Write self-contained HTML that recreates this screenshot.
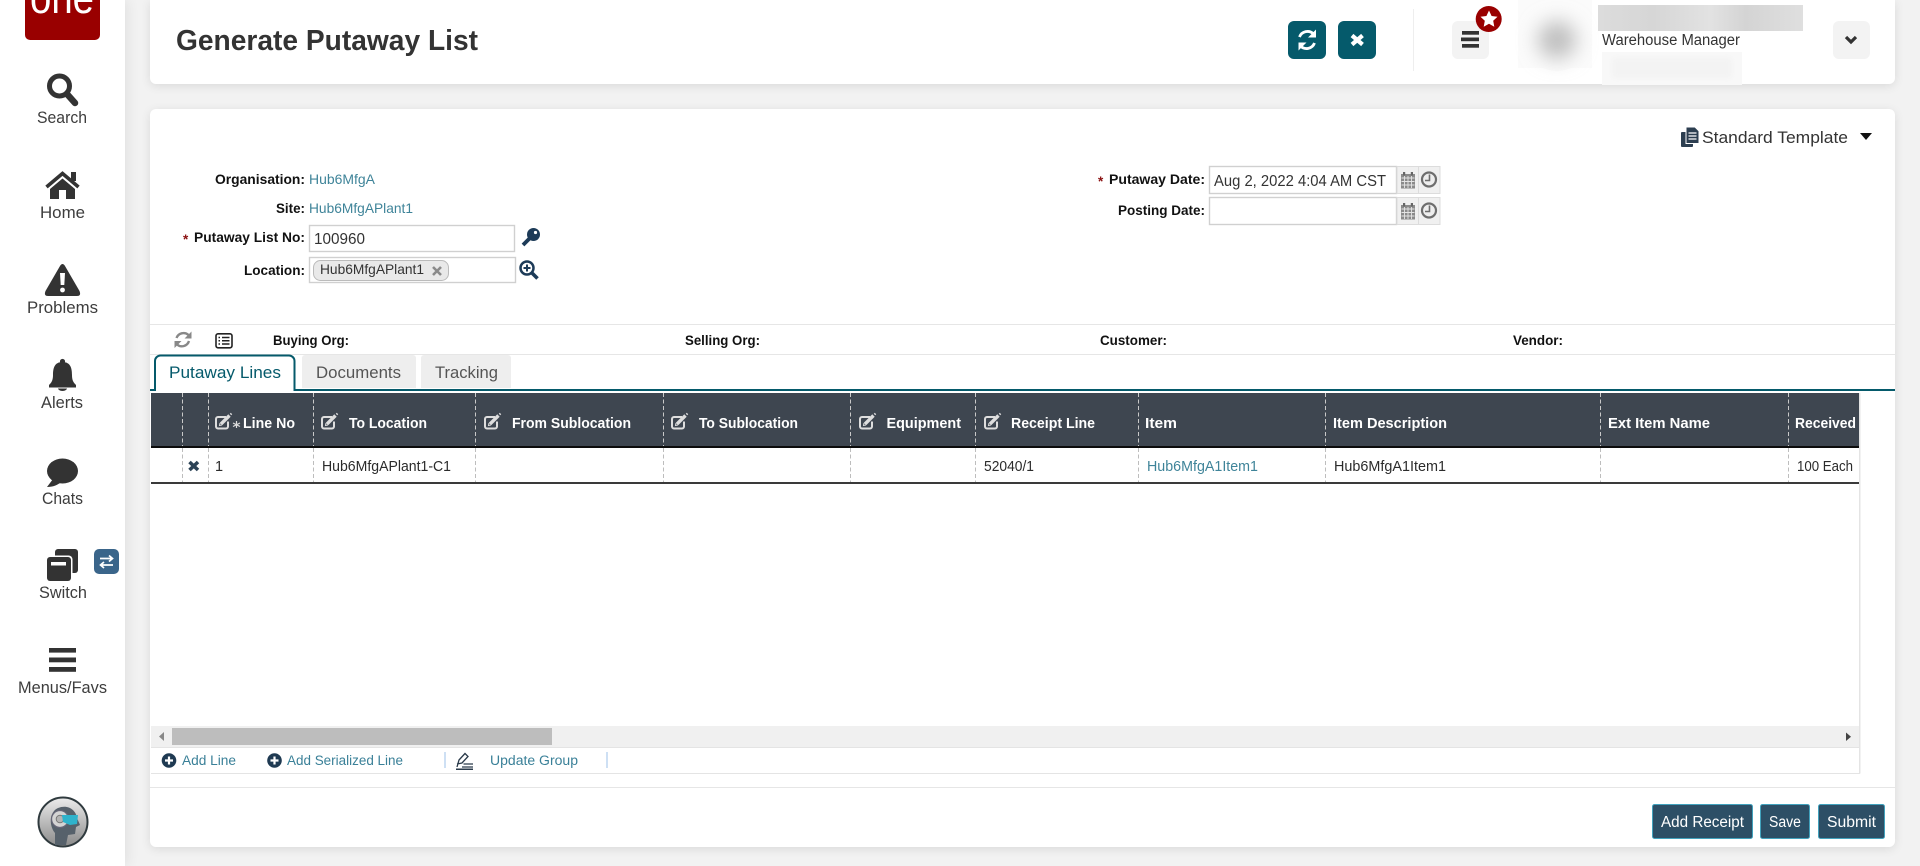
<!DOCTYPE html>
<html><head><meta charset="utf-8"><title>Generate Putaway List</title>
<style>
html,body{margin:0;padding:0;width:1920px;height:866px;overflow:hidden;background:#f2f2f2}
.c{position:absolute;background:#fff;box-shadow:0 2px 10px rgba(0,0,0,.10)}
svg{position:absolute;left:0;top:0}
text{font-family:"Liberation Sans",Arial,sans-serif;font-size:14px;fill:#333}
.b{font-weight:bold;font-size:13.5px;fill:#111}
.l{font-size:14px;fill:#3f8499}
.r{font-size:14.5px;fill:#2b2b2b}
.h{font-weight:bold;font-size:14.5px;fill:#fff}
.s{font-size:16.5px;fill:#3d3d3d}
.w{font-size:15.5px;fill:#fff}
.t{font-size:13.5px;fill:#3a8098}
</style></head><body>
<div class="c" style="left:0;top:0;width:125px;height:866px;box-shadow:3px 0 12px rgba(0,0,0,.07)"></div>
<div class="c" style="left:150px;top:0;width:1745px;height:84px;border-radius:0 0 6px 6px"></div>
<div class="c" style="left:150px;top:109px;width:1745px;height:738px;border-radius:6px"></div>
<svg width="1920" height="866" viewBox="0 0 1920 866">
<defs>
<filter id="bl" x="-80%" y="-80%" width="260%" height="260%"><feGaussianBlur stdDeviation="10"/></filter>
<filter id="bl2" x="-10%" y="-30%" width="120%" height="160%"><feGaussianBlur stdDeviation="3"/></filter>
<linearGradient id="ng"><stop offset="0" stop-color="#dcdcdc"/><stop offset=".27" stop-color="#d6d6d6"/><stop offset=".55" stop-color="#e2e2e2"/><stop offset=".72" stop-color="#d4d4d4"/><stop offset="1" stop-color="#dfdfdf"/></linearGradient>
<linearGradient id="ag" x1="0" y1="0" x2="0" y2="1"><stop offset="0" stop-color="#ececec"/><stop offset="1" stop-color="#8a8a8a"/></linearGradient>
<g id="ed" fill="none" stroke="#dedede">
<path d="M11 4.500H3a2 2 0 0 0-2 2V14a2 2 0 0 0 2 2h8a2 2 0 0 0 2-2V9" stroke-width="2"/>
<path d="M6 11.500L14.500 3" stroke-width="3.400"/><path d="M5 10.500L4.500 13l2.500-.5" stroke-width="1"/>
<path d="M15.500 2l1-1" stroke-width="2"/>
</g>
<g id="pl"><circle r="7.300" fill="#1f3a52"/><path d="M-4-0H4M0-4V4" stroke="#fff" stroke-width="2.200"/></g>
</defs>

<!-- logo -->
<path d="M25 0H100V35a5 5 0 0 1-5 5H30a5 5 0 0 1-5-5Z" fill="#990000"/>
<text x="30" y="13" textLength="64" lengthAdjust="spacingAndGlyphs" style="font-size:45px;fill:#fff">one</text>

<!-- sidebar icons -->
<circle cx="59.500" cy="86" r="10" fill="none" stroke="#333" stroke-width="5"/>
<path d="M67 94L75 103" stroke="#333" stroke-width="6.500" stroke-linecap="round"/>
<text class="s" x="37" y="123" textLength="50" lengthAdjust="spacingAndGlyphs">Search</text>

<path d="M46.500 187L62.500 173.500L78.500 187" fill="none" stroke="#333" stroke-width="3.600"/>
<rect x="71" y="172" width="5" height="9" fill="#333"/>
<path d="M50 189L62.500 178.500L75 189V199H66V190H59V199H50Z" fill="#333"/>
<text class="s" x="40" y="218" textLength="45" lengthAdjust="spacingAndGlyphs">Home</text>

<path d="M60 266Q62.500 262 65 266L79.500 291Q81.500 296 77 296H48Q43.500 296 45.500 291Z" fill="#333"/>
<path d="M60 273H65L64.300 285H60.700Z" fill="#fff"/><circle cx="62.500" cy="290" r="2.400" fill="#fff"/>
<text class="s" x="27" y="313" textLength="71" lengthAdjust="spacingAndGlyphs">Problems</text>

<circle cx="62.500" cy="361.500" r="2.600" fill="#333"/>
<path d="M62.500 362C71 362 72 369 72 375C72 381 74 383 76 385V387.500H49V385C51 383 53 381 53 375C53 369 54 362 62.500 362Z" fill="#333"/>
<path d="M58 388.500H67C66 391.800 59 391.800 58 388.500Z" fill="#333"/>
<text class="s" x="41" y="408" textLength="42" lengthAdjust="spacingAndGlyphs">Alerts</text>

<ellipse cx="62.500" cy="471" rx="15.500" ry="12.500" fill="#333"/>
<path d="M53 479L47 487C53 487 58 485 61 482Z" fill="#333"/>
<text class="s" x="42" y="504" textLength="41" lengthAdjust="spacingAndGlyphs">Chats</text>

<rect x="55" y="549" width="23" height="24" rx="3" fill="#333"/>
<rect x="45.500" y="555.500" width="27" height="27" rx="4" fill="#fff"/>
<rect x="47" y="557" width="24" height="24" rx="3" fill="#333"/>
<rect x="51" y="562" width="15" height="3.500" fill="#fff"/>
<rect x="94" y="549" width="25" height="25" rx="5" fill="#3a658a"/>
<path d="M100 558.500H112M109 555.500L112.500 558.500L109 561.500M113 565H101M104 562L100.500 565L104 568" fill="none" stroke="#fff" stroke-width="1.700"/>
<text class="s" x="39" y="598" textLength="48" lengthAdjust="spacingAndGlyphs">Switch</text>

<rect x="49" y="648" width="27" height="4.600" fill="#333"/><rect x="49" y="657.500" width="27" height="4.800" fill="#333"/><rect x="49" y="667" width="27" height="4.800" fill="#333"/>
<text class="s" x="18" y="693" textLength="89" lengthAdjust="spacingAndGlyphs">Menus/Favs</text>

<!-- robot avatar -->
<circle cx="63" cy="822" r="24.500" fill="url(#ag)" stroke="#2f3a3e" stroke-width="2"/>
<path d="M55 845V833C49 826 49 812 58 808C68 804 76 810 77 818L80 825L76 827L75 834L68 835L66 845Z" fill="#56616b"/>
<circle cx="60" cy="819" r="8.500" fill="#d4d4d4" stroke="#667" stroke-width="1.300"/>
<circle cx="60" cy="819" r="3.800" fill="#b4b4b4" stroke="#777"/>
<path d="M62 815H78L77 824L70 825L63 822Z" fill="#2fb3cc"/>

<!-- header -->
<text x="176" y="50" textLength="302" lengthAdjust="spacingAndGlyphs" style="font-size:29px;font-weight:bold;fill:#333">Generate Putaway List</text>
<rect x="1288" y="21" width="38" height="38" rx="6" fill="#055a6b"/>
<path d="M1299.500 37A8.500 8.500 0 0 1 1313.500 34M1314.500 43A8.500 8.500 0 0 1 1300.500 46" fill="none" stroke="#fff" stroke-width="2.800"/>
<path d="M1316 29.500V37.500H1308ZM1298.500 50.500V42.500H1306.500Z" fill="#fff"/>
<rect x="1338" y="21" width="38" height="38" rx="6" fill="#055a6b"/>
<path d="M1352 35.500L1362.500 44.500M1362.500 35.500L1352 44.500" stroke="#fff" stroke-width="4.200"/>
<rect x="1413" y="9" width="1" height="62" fill="#eee"/>
<rect x="1452" y="21" width="37" height="38" rx="6" fill="#f3f3f3"/>
<rect x="1462" y="31" width="17" height="3.700" fill="#333"/><rect x="1461" y="37.500" width="18" height="3.700" fill="#333"/><rect x="1462" y="44" width="17" height="3.700" fill="#333"/>
<circle cx="1488.700" cy="19" r="13" fill="#990000"/>
<path d="M1489 10.500L1491.600 16L1497.500 16.700L1493.200 20.800L1494.300 26.800L1489 23.800L1483.700 26.800L1484.800 20.800L1480.500 16.700L1486.400 16Z" fill="#fff"/>
<rect x="1518" y="0" width="74" height="68" fill="#fbfbfb"/>
<circle cx="1557" cy="40" r="31" fill="#fbfbfb"/>
<circle cx="1557" cy="40" r="19" fill="#bdbdbd" filter="url(#bl)"/>
<rect x="1598" y="5" width="205" height="26" fill="url(#ng)"/>
<text x="1602" y="45" textLength="138" lengthAdjust="spacingAndGlyphs" style="font-size:15.500px;fill:#333">Warehouse Manager</text>
<rect x="1602" y="52" width="140" height="33" fill="#f8f8f8"/>
<rect x="1612" y="58" width="120" height="20" fill="#f3f3f3" filter="url(#bl2)"/>
<rect x="1833" y="21" width="37" height="38" rx="6" fill="#f3f3f3"/>
<path d="M1846 37L1851 42L1856 37" fill="none" stroke="#333" stroke-width="3.200"/>

<!-- template -->
<rect x="1681" y="132" width="12" height="15" rx="1" fill="#2c3e50"/>
<path d="M1689 127H1695L1699 131V143.500H1686V127Z" fill="#2c3e50" stroke="#fff" stroke-width="1"/>
<path d="M1688.500 133H1696.500M1688.500 136H1696.500M1688.500 139H1696.500" stroke="#fff" stroke-width="1.200"/>
<text x="1702" y="143" textLength="146" lengthAdjust="spacingAndGlyphs" style="font-size:17px;fill:#333">Standard Template</text>
<path d="M1860 133H1872L1866 140Z" fill="#111"/>

<!-- form left -->
<text class="b" x="215" y="184" textLength="90" lengthAdjust="spacingAndGlyphs">Organisation:</text>
<text class="l" x="309" y="184" textLength="66" lengthAdjust="spacingAndGlyphs">Hub6MfgA</text>
<text class="b" x="276" y="213" textLength="29" lengthAdjust="spacingAndGlyphs">Site:</text>
<text class="l" x="309" y="213" textLength="104" lengthAdjust="spacingAndGlyphs">Hub6MfgAPlant1</text>
<text class="b" x="183" y="244" style="fill:#8a1010">*</text>
<text class="b" x="194" y="242" textLength="111" lengthAdjust="spacingAndGlyphs">Putaway List No:</text>
<rect x="309.500" y="225.500" width="205" height="26" fill="#fff" stroke="#d0d0d0" stroke-width="1.400"/>
<text x="314" y="244" textLength="51" lengthAdjust="spacingAndGlyphs" style="font-size:15.500px;fill:#333">100960</text>
<circle cx="533.500" cy="234.500" r="6.500" fill="#1d3b58"/><circle cx="535.500" cy="232.500" r="1.600" fill="#fff"/>
<path d="M530 238L523 245" stroke="#1d3b58" stroke-width="3.800"/>
<text class="b" x="244" y="275" textLength="61" lengthAdjust="spacingAndGlyphs">Location:</text>
<rect x="309.500" y="257.500" width="206" height="25" fill="#fff" stroke="#d0d0d0" stroke-width="1.400"/>
<rect x="313.500" y="260.500" width="135" height="20" rx="7" fill="#e9e9e9" stroke="#bbb"/>
<text x="320" y="274" textLength="104" lengthAdjust="spacingAndGlyphs" style="font-size:14px;fill:#333">Hub6MfgAPlant1</text>
<path d="M433 267L441 275M441 267L433 275" stroke="#8a8a8a" stroke-width="2.600"/>
<circle cx="527" cy="268" r="6.500" fill="none" stroke="#1d3b58" stroke-width="2.500"/>
<path d="M523.500 268H530.500M527 264.500V271.500" stroke="#1d3b58" stroke-width="2"/>
<path d="M532 273L537.500 278.500" stroke="#1d3b58" stroke-width="3.600"/>

<!-- form right -->
<text class="b" x="1098" y="186" style="fill:#8a1010">*</text>
<text class="b" x="1109" y="184" textLength="96" lengthAdjust="spacingAndGlyphs">Putaway Date:</text>
<rect x="1209.500" y="166.500" width="187" height="27" fill="#fff" stroke="#d0d0d0" stroke-width="1.400"/>
<text x="1214" y="186" textLength="172" lengthAdjust="spacingAndGlyphs" style="font-size:15.500px;fill:#333">Aug 2, 2022 4:04 AM CST</text>
<text class="b" x="1118" y="215" textLength="87" lengthAdjust="spacingAndGlyphs">Posting Date:</text>
<rect x="1209.500" y="197.500" width="187" height="27" fill="#fff" stroke="#d0d0d0" stroke-width="1.400"/>
<g id="ad">
<rect x="1397" y="166.500" width="21.500" height="27" fill="#f0f0f0" stroke="#dcdcdc"/>
<rect x="1418.500" y="166.500" width="21.500" height="27" fill="#f0f0f0" stroke="#dcdcdc"/>
<rect x="1401" y="174" width="14" height="14.500" fill="#8a8a8a"/>
<path d="M1401.500 178H1414.500M1401.500 181.500H1414.500M1401.500 185H1414.500M1404.500 176V188M1408 176V188M1411.500 176V188" stroke="#e4e4e4" stroke-width=".9"/>
<rect x="1403" y="172" width="2.200" height="3.500" fill="#666"/><rect x="1410.800" y="172" width="2.200" height="3.500" fill="#666"/>
<circle cx="1429" cy="179.500" r="7" fill="#eee" stroke="#6e6e6e" stroke-width="2.200"/>
<path d="M1429.500 174.500V180.500H1425" fill="none" stroke="#6e6e6e" stroke-width="1.600"/>
</g>
<use href="#ad" y="31"/>

<!-- sub bar -->
<rect x="150" y="324" width="1745" height="1" fill="#e6e6e6"/>
<rect x="150" y="354" width="1745" height="1" fill="#e6e6e6"/>
<path d="M176.500 338A7.500 7.500 0 0 1 188.500 335M189 341A7.500 7.500 0 0 1 177 344.500" fill="none" stroke="#888" stroke-width="2.400"/>
<path d="M191.500 331.500V338.500H184.500ZM174.500 348V341H181.500Z" fill="#888"/>
<rect x="216" y="333.800" width="16" height="14" rx="2" fill="#fff" stroke="#222" stroke-width="1.600"/>
<path d="M218.500 337.500H220M218.500 340.800H220M218.500 344H220M222 337.500H229.500M222 340.800H229.500M222 344H229.500" stroke="#222" stroke-width="1.500"/>
<text class="b" x="273" y="345" textLength="76" lengthAdjust="spacingAndGlyphs">Buying Org:</text>
<text class="b" x="685" y="345" textLength="75" lengthAdjust="spacingAndGlyphs">Selling Org:</text>
<text class="b" x="1100" y="345" textLength="67" lengthAdjust="spacingAndGlyphs">Customer:</text>
<text class="b" x="1513" y="345" textLength="50" lengthAdjust="spacingAndGlyphs">Vendor:</text>

<!-- tabs -->
<rect x="150" y="389" width="1745" height="2" fill="#055a6b"/>
<path d="M155 391V361a5.500 5.500 0 0 1 5.500-5.500H289a5.500 5.500 0 0 1 5.500 5.500V391" fill="#fff" stroke="#055a6b" stroke-width="2"/>
<rect x="156" y="388" width="137.500" height="4" fill="#fff"/>
<text x="169" y="378" textLength="112" lengthAdjust="spacingAndGlyphs" style="font-size:16.500px;fill:#055a6b">Putaway Lines</text>
<path d="M302 388V358a3 3 0 0 1 3-3H413a3 3 0 0 1 3 3V388Z" fill="#eee"/>
<text x="316" y="378" textLength="85" lengthAdjust="spacingAndGlyphs" style="font-size:16.500px;fill:#555">Documents</text>
<path d="M421 388V358a3 3 0 0 1 3-3H508a3 3 0 0 1 3 3V388Z" fill="#eee"/>
<text x="435" y="378" textLength="63" lengthAdjust="spacingAndGlyphs" style="font-size:16.500px;fill:#555">Tracking</text>

<!-- table -->
<rect x="151" y="393" width="1708" height="53" fill="#3e4650"/>
<rect x="151" y="446" width="1708" height="2" fill="#0c0c0c"/>
<rect x="151" y="482" width="1708" height="2" fill="#3a3a3a"/>
<rect x="1859" y="393" width="1.500" height="380.500" fill="#e4e4e4"/>
<g fill="none" stroke-dasharray="4 2.500" stroke-width="1">
<path stroke="#c9c9c9" d="M182.500 393V446M208.500 393V446M313.500 393V446M475.500 393V446M663.500 393V446M850.500 393V446M975.500 393V446M1138.500 393V446M1325.500 393V446M1600.500 393V446M1788.500 393V446"/>
<path stroke="#bdbdbd" d="M182.500 448V482M208.500 448V482M313.500 448V482M475.500 448V482M663.500 448V482M850.500 448V482M975.500 448V482M1138.500 448V482M1325.500 448V482M1600.500 448V482M1788.500 448V482"/>
</g>
<use href="#ed" x="215" y="412.500"/>
<path d="M236.500 421V428M233 423L240 426.500M240 423L233 426.500" stroke="#ddd" stroke-width="1.200"/>
<text class="h" x="243" y="428" textLength="52" lengthAdjust="spacingAndGlyphs">Line No</text>
<use href="#ed" x="321" y="412.500"/>
<text class="h" x="349" y="428" textLength="78" lengthAdjust="spacingAndGlyphs">To Location</text>
<use href="#ed" x="484" y="412.500"/>
<text class="h" x="512" y="428" textLength="119" lengthAdjust="spacingAndGlyphs">From Sublocation</text>
<use href="#ed" x="671" y="412.500"/>
<text class="h" x="699" y="428" textLength="99" lengthAdjust="spacingAndGlyphs">To Sublocation</text>
<use href="#ed" x="859" y="412.500"/>
<text class="h" x="886.500" y="428" textLength="74.500" lengthAdjust="spacingAndGlyphs">Equipment</text>
<use href="#ed" x="984" y="412.500"/>
<text class="h" x="1011" y="428" textLength="84" lengthAdjust="spacingAndGlyphs">Receipt Line</text>
<text class="h" x="1145" y="428" textLength="32" lengthAdjust="spacingAndGlyphs">Item</text>
<text class="h" x="1333" y="428" textLength="114" lengthAdjust="spacingAndGlyphs">Item Description</text>
<text class="h" x="1608" y="428" textLength="102" lengthAdjust="spacingAndGlyphs">Ext Item Name</text>
<text class="h" x="1795" y="428" textLength="61" lengthAdjust="spacingAndGlyphs">Received</text>

<path d="M189.500 462L198 470M198 462L189.500 470" stroke="#2c4356" stroke-width="3.600"/>
<text class="r" x="215" y="471">1</text>
<text class="r" x="322" y="471" textLength="129" lengthAdjust="spacingAndGlyphs">Hub6MfgAPlant1-C1</text>
<text class="r" x="984" y="471" textLength="50" lengthAdjust="spacingAndGlyphs">52040/1</text>
<text class="r" x="1147" y="471" textLength="111" lengthAdjust="spacingAndGlyphs" style="fill:#3f8499">Hub6MfgA1Item1</text>
<text class="r" x="1334" y="471" textLength="112" lengthAdjust="spacingAndGlyphs">Hub6MfgA1Item1</text>
<text class="r" x="1797" y="471" textLength="56" lengthAdjust="spacingAndGlyphs">100 Each</text>

<!-- scrollbar -->
<rect x="151" y="726" width="1708" height="21" fill="#f0f0f0"/>
<rect x="172" y="728" width="380" height="17" fill="#bdbdbd"/>
<path d="M164 732V741L159 736.500Z" fill="#888"/>
<path d="M1846 732.500V741L1851 736.750Z" fill="#444"/>
<rect x="151" y="747" width="1709" height="1" fill="#e4e4e4"/>
<rect x="151" y="773" width="1709" height="1" fill="#e4e4e4"/>

<!-- toolbar -->
<use href="#pl" x="169" y="760.500"/>
<text class="t" x="182" y="765" textLength="54" lengthAdjust="spacingAndGlyphs">Add Line</text>
<use href="#pl" x="274.500" y="760.500"/>
<text class="t" x="287" y="765" textLength="116" lengthAdjust="spacingAndGlyphs">Add Serialized Line</text>
<rect x="444.500" y="752" width="1" height="16" fill="#9cc2ea"/>
<path d="M457 767L459 760L465 753.500L468 756.500L462 763L457 764M463.500 764H473M462 767H473" fill="none" stroke="#2a3a4a" stroke-width="1.300"/>
<rect x="456" y="768.500" width="17" height="1.500" fill="#2a3a4a"/>
<text class="t" x="490" y="765" textLength="88" lengthAdjust="spacingAndGlyphs">Update Group</text>
<rect x="606.500" y="752" width="1" height="16" fill="#9cc2ea"/>
<rect x="150" y="787" width="1745" height="1" fill="#e6e6e6"/>

<!-- buttons -->
<rect x="1652.500" y="804.500" width="100" height="34" rx="2" fill="#2d4f66" stroke="#41a2bd"/>
<text class="w" x="1661" y="827" textLength="83" lengthAdjust="spacingAndGlyphs">Add Receipt</text>
<rect x="1760.500" y="804.500" width="49" height="34" rx="2" fill="#2d4f66" stroke="#41a2bd"/>
<text class="w" x="1769" y="827" textLength="32" lengthAdjust="spacingAndGlyphs">Save</text>
<rect x="1818.500" y="804.500" width="66" height="34" rx="2" fill="#2d4f66" stroke="#41a2bd"/>
<text class="w" x="1827" y="827" textLength="49" lengthAdjust="spacingAndGlyphs">Submit</text>
</svg>
</body></html>
